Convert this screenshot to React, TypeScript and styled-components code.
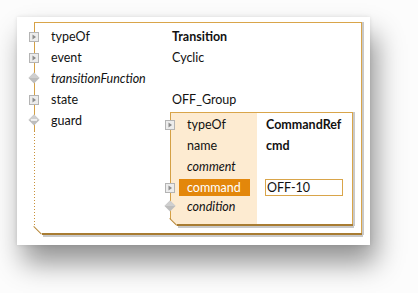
import React, { FC } from 'react'
import styled, { createGlobalStyle } from 'styled-components'

const GlobalStyle = createGlobalStyle`
  body {
    margin: 0;
    background: #fcfcfc;
    font-family: 'Lato', 'Open Sans', sans-serif;
    font-size: 12.5px;
    color: #111;
  }
`

const Page = styled.div`
  height: 293px;
  padding: 17px 0 0 17px;
  box-sizing: border-box;
  overflow: hidden;
`

const Card = styled.div`
  width: 353px;
  height: 228px;
  box-sizing: border-box;
  padding: 5px 8px 10px 17px;
  background: #fff;
  box-shadow:
    0 0 4px rgba(0, 0, 0, 0.1),
    6px 18px 26px rgba(0, 0, 0, 0.42);
`

const Frame = styled.div`
  position: relative;
  box-sizing: border-box;
  height: 213px;
  padding-top: 3px;
  border-top: 1px solid #d9a54a;
  border-right: 1px solid #d9a54a;
  box-shadow: 2px 0 0 #c9c9c9;

  &::before {
    content: '';
    position: absolute;
    left: 0;
    top: 0;
    bottom: 8px;
    width: 1px;
    background:
      linear-gradient(#d4a045, #d4a045) top / 1px 108px no-repeat,
      repeating-linear-gradient(to bottom, #c8913a 0 1px, transparent 1px 3px);
  }

  &::after {
    content: '';
    position: absolute;
    left: 8px;
    right: -1px;
    bottom: 0;
    height: 2px;
    background: #a87c32;
    box-shadow: 1px 2px 0 #c9c9c9;
  }
`

const Bevel = styled.span<{ $size: number; $color: string }>`
  position: absolute;
  left: 0;
  bottom: 0;
  width: ${({ $size }) => Math.round($size * 1.414)}px;
  height: 1px;
  background: ${({ $color }) => $color};
  transform-origin: 0 0;
  transform: translateY(-${({ $size }) => $size}px) rotate(45deg);
`

const Row = styled.div<{ $cols: string }>`
  position: relative;
  display: grid;
  grid-template-columns: ${({ $cols }) => $cols};
  align-items: start;
`

const Label = styled.div<{ $italic?: boolean }>`
  height: 21px;
  line-height: 21px;
  white-space: nowrap;
  font-style: ${({ $italic }) => ($italic ? 'italic' : 'normal')};
`

const Value = styled.div<{ $bold?: boolean }>`
  height: 21px;
  line-height: 21px;
  white-space: nowrap;
  font-weight: ${({ $bold }) => ($bold ? 700 : 400)};
`

const IconSlot = styled.span<{ $top: number }>`
  position: absolute;
  left: -6px;
  top: ${({ $top }) => $top}px;
  width: 12px;
  height: 12px;
  display: flex;
  align-items: center;
  justify-content: center;
`

const Inner = styled.div`
  position: relative;
  box-sizing: border-box;
  margin: 2px 0 0 -2px;
  width: 183px;
  height: 114px;
  padding-top: 1px;
  background: linear-gradient(to right, #fdebd1 87px, #fff 87px);
  border-top: 1px solid #d9a54a;
  border-right: 1px solid #d9a54a;
  box-shadow: 2px 0 0 #c9c9c9;

  &::before {
    content: '';
    position: absolute;
    left: 0;
    top: 0;
    bottom: 7px;
    width: 1px;
    background: #d4a045;
  }

  &::after {
    content: '';
    position: absolute;
    left: 7px;
    right: -1px;
    bottom: 0;
    height: 2px;
    background: #a87c32;
    box-shadow: 1px 2px 0 #c9c9c9;
  }
`

const InnerCut = styled.span`
  position: absolute;
  left: 0;
  bottom: 0;
  width: 8px;
  height: 8px;
  background: linear-gradient(to top right, #fff 50%, transparent 50%);
`

const InnerLabel = styled(Label)<{ $active?: boolean }>`
  box-sizing: border-box;
  justify-self: start;
  margin: ${({ $active }) => ($active ? '2px' : '0')} 0 0 9px;
  padding: 0 8px;
  min-width: ${({ $active }) => ($active ? '71px' : '0')};
  height: ${({ $active }) => ($active ? '17px' : '21px')};
  line-height: ${({ $active }) => ($active ? '17px' : '21px')};
  background: ${({ $active }) => ($active ? '#e3870b' : 'transparent')};
  color: ${({ $active }) => ($active ? '#fff' : 'inherit')};
`

const InnerValue = styled(Value)`
  padding-left: 9px;
`

const Editor = styled.div`
  margin: 2px 0 0 8px;
  width: 78px;
  height: 17px;
  box-sizing: border-box;
  border: 1px solid #d9a54a;
  line-height: 15px;
  padding-left: 1px;
  background: #fff;
`

const ExpandIcon: FC = () => (
  <svg width='10' height='10' viewBox='0 0 10 10'>
    <rect x='0.5' y='0.5' width='9' height='9' fill='#ececec' stroke='#b4b4b4' />
    <path d='M3.5 2.5 L7 5 L3.5 7.5 Z' fill='#8c8c8c' />
  </svg>
)

const DiamondIcon: FC<{ minus?: boolean }> = ({ minus }) => (
  <svg width='12' height='12' viewBox='0 0 12 12'>
    <path d='M6 0.5 L11.5 6 L6 11.5 L0.5 6 Z' fill='#bdbdbd' />
    <path d='M6 0.5 L11.5 6 L0.5 6 Z' fill='#cfcfcf' />
    {minus && <rect x='3' y='5.3' width='6' height='1.4' fill='#fff' />}
  </svg>
)

const Expand: FC = () => (
  <IconSlot $top={5}>
    <ExpandIcon />
  </IconSlot>
)

const Diamond: FC<{ minus?: boolean }> = ({ minus }) => (
  <IconSlot $top={4}>
    <DiamondIcon minus={minus} />
  </IconSlot>
)

const OUTER = '17px 121px 1fr'
const INNER = '87px 1fr'

const App: FC = () => (
  <Page>
    <GlobalStyle />
    <Card>
      <Frame>
        <Row $cols={OUTER}>
          <Expand />
          <span />
          <Label>typeOf</Label>
          <Value $bold>Transition</Value>
        </Row>
        <Row $cols={OUTER}>
          <Expand />
          <span />
          <Label>event</Label>
          <Value>Cyclic</Value>
        </Row>
        <Row $cols={OUTER}>
          <Diamond />
          <span />
          <Label $italic>transitionFunction</Label>
          <Value />
        </Row>
        <Row $cols={OUTER}>
          <Expand />
          <span />
          <Label>state</Label>
          <Value>OFF_Group</Value>
        </Row>
        <Row $cols={OUTER}>
          <Diamond minus />
          <span />
          <Label>guard</Label>
          <Inner>
            <Row $cols={INNER}>
              <Expand />
              <InnerLabel>typeOf</InnerLabel>
              <InnerValue $bold>CommandRef</InnerValue>
            </Row>
            <Row $cols={INNER}>
              <InnerLabel>name</InnerLabel>
              <InnerValue $bold>cmd</InnerValue>
            </Row>
            <Row $cols={INNER}>
              <InnerLabel $italic>comment</InnerLabel>
              <InnerValue />
            </Row>
            <Row $cols={INNER}>
              <Expand />
              <InnerLabel $active>command</InnerLabel>
              <Editor>OFF-10</Editor>
            </Row>
            <Row $cols={INNER}>
              <Diamond />
              <InnerLabel $italic>condition</InnerLabel>
              <InnerValue />
            </Row>
            <InnerCut />
            <Bevel $size={7} $color='#b88838' />
          </Inner>
        </Row>
        <Bevel $size={8} $color='#b88838' />
      </Frame>
    </Card>
  </Page>
)

export default App
